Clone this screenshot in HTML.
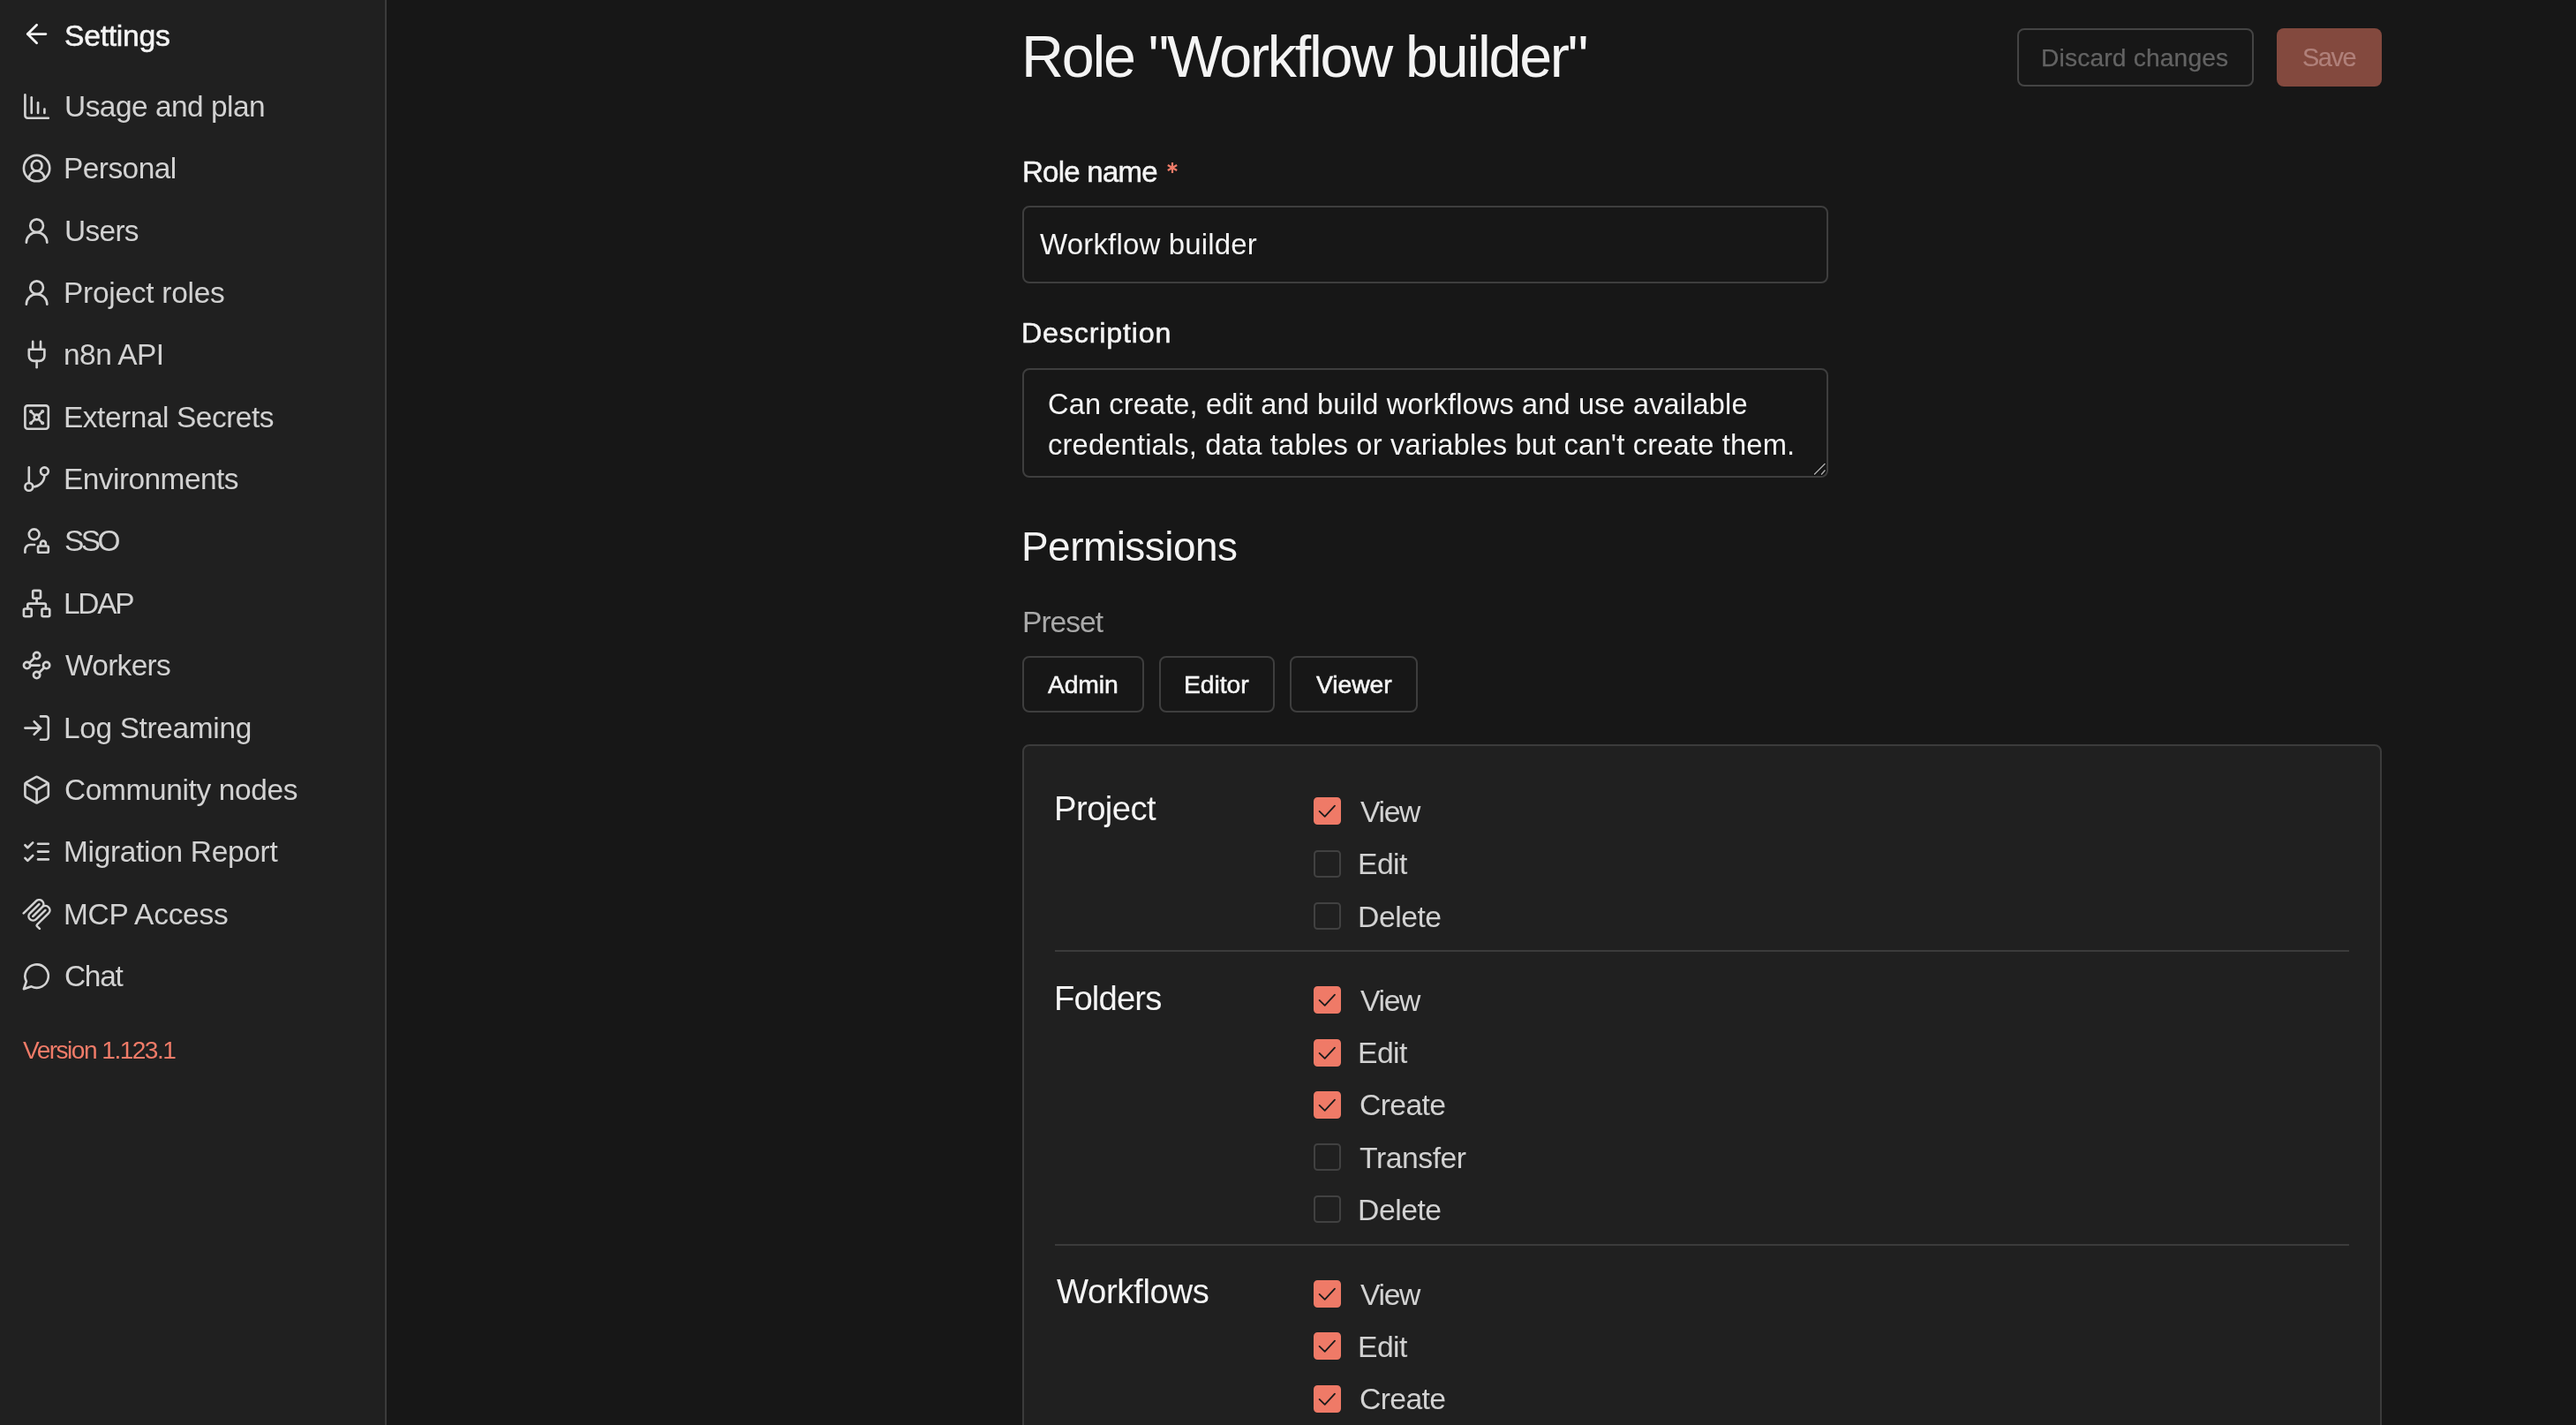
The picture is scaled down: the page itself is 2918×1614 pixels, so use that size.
<!DOCTYPE html>
<html><head><meta charset="utf-8"><title>Role</title><style>
html,body{margin:0;padding:0}
body{width:2918px;height:1614px;overflow:hidden;position:relative;background:#171717;font-family:"Liberation Sans",sans-serif;}
.t{position:absolute;white-space:pre;will-change:transform;font-family:"Liberation Sans",sans-serif;}
.sidebar{position:absolute;left:0;top:0;width:436px;height:1614px;background:#202020;border-right:2px solid #3b3b3b;}
.box{position:absolute;box-sizing:border-box;}
.cb{position:absolute;left:1488px;width:31px;height:31px;box-sizing:border-box;border:2px solid #414141;border-radius:4.5px;background:transparent;}
.cb.on{background:#ef7a67;border-color:#ef7a67;}
.cb svg{position:absolute;left:-2px;top:-2px;}
.ico{position:absolute;}
@media (max-width:2000px){html{zoom:0.5}}


</style></head><body>
<div class="sidebar"></div>
<div class="box" style="left:2285px;top:32px;width:268px;height:66px;border:2px solid #444;border-radius:8px;"></div>
<div class="box" style="left:2579px;top:32px;width:119px;height:66px;background:#83493e;border-radius:8px;"></div>
<div class="box" style="left:1158px;top:233px;width:913px;height:88px;border:2px solid #3e3e3e;border-radius:8px;background:#171717"></div>
<div class="box" style="left:1158px;top:417px;width:913px;height:124px;border:2px solid #3e3e3e;border-radius:8px;background:#171717"></div>
<svg class="ico" style="left:2050px;top:521px" width="20" height="20" viewBox="0 0 20 20"><path d="M5.5 16 L17 4.5 M13.5 16 L17 12" stroke="#0a0a0a" stroke-width="3.6" stroke-linecap="round"/><path d="M5.5 16 L17 4.5 M13.5 16 L17 12" stroke="#a3a3a3" stroke-width="1.7" stroke-linecap="round"/></svg>
<div class="box" style="left:1158px;top:743px;width:138px;height:64px;border:2px solid #3e3e3e;border-radius:8px;"></div>
<div class="box" style="left:1313px;top:743px;width:131px;height:64px;border:2px solid #3e3e3e;border-radius:8px;"></div>
<div class="box" style="left:1461px;top:743px;width:145px;height:64px;border:2px solid #3e3e3e;border-radius:8px;"></div>
<div class="box" style="left:1158px;top:843px;width:1540px;height:900px;border:2px solid #3b3b3b;border-radius:8px;background:#202020"></div>
<div class="box" style="left:1195px;top:1076px;width:1466px;height:2px;background:#3b3b3b"></div>
<div class="box" style="left:1195px;top:1409px;width:1466px;height:2px;background:#3b3b3b"></div>
<svg class="ico" style="left:1321px;top:183px" width="14" height="14" viewBox="0 0 14 14"><path d="M7 1 V13 M1.8 4 L12.2 10 M1.8 10 L12.2 4" stroke="#f07b68" stroke-width="2.2"/></svg>

<svg class="ico" style="left:23.90px;top:21.00px;color:#f4f4f4" width="35.20" height="35.20" viewBox="0 0 24 24" fill="none" stroke="currentColor" stroke-width="1.9" stroke-linecap="round" stroke-linejoin="round"><path d="m12 19-7-7 7-7"/><path d="M19 12H5"/></svg>
<svg class="ico" style="left:23.80px;top:103.00px;color:#d2d2d2" width="35.20" height="35.20" viewBox="0 0 24 24" fill="none" stroke="currentColor" stroke-width="1.8" stroke-linecap="round" stroke-linejoin="round"><path d="M13 17V9"/><path d="M18 17v-3"/><path d="M3 3v16a2 2 0 0 0 2 2h16"/><path d="M8 17V5"/></svg>
<svg class="ico" style="left:23.80px;top:173.35px;color:#d2d2d2" width="35.20" height="35.20" viewBox="0 0 24 24" fill="none" stroke="currentColor" stroke-width="1.8" stroke-linecap="round" stroke-linejoin="round"><path d="M18 20a6 6 0 0 0-12 0"/><circle cx="12" cy="10" r="4"/><circle cx="12" cy="12" r="10"/></svg>
<svg class="ico" style="left:23.80px;top:243.70px;color:#d2d2d2" width="35.20" height="35.20" viewBox="0 0 24 24" fill="none" stroke="currentColor" stroke-width="1.8" stroke-linecap="round" stroke-linejoin="round"><circle cx="12" cy="8" r="5"/><path d="M20 21a8 8 0 0 0-16 0"/></svg>
<svg class="ico" style="left:23.80px;top:314.05px;color:#d2d2d2" width="35.20" height="35.20" viewBox="0 0 24 24" fill="none" stroke="currentColor" stroke-width="1.8" stroke-linecap="round" stroke-linejoin="round"><circle cx="12" cy="8" r="5"/><path d="M20 21a8 8 0 0 0-16 0"/></svg>
<svg class="ico" style="left:23.80px;top:384.40px;color:#d2d2d2" width="35.20" height="35.20" viewBox="0 0 24 24" fill="none" stroke="currentColor" stroke-width="1.8" stroke-linecap="round" stroke-linejoin="round"><path d="M12 22v-5"/><path d="M9 8V2"/><path d="M15 8V2"/><path d="M18 8v5a4 4 0 0 1-4 4h-4a4 4 0 0 1-4-4V8Z"/></svg>
<svg class="ico" style="left:23.80px;top:454.75px;color:#d2d2d2" width="35.20" height="35.20" viewBox="0 0 24 24" fill="none" stroke="currentColor" stroke-width="1.8" stroke-linecap="round" stroke-linejoin="round"><rect width="18" height="18" x="3" y="3" rx="2"/><circle cx="7.5" cy="7.5" r=".5" fill="currentColor"/><path d="m7.9 7.9 2.7 2.7"/><circle cx="16.5" cy="7.5" r=".5" fill="currentColor"/><path d="m13.4 10.6 2.7-2.7"/><circle cx="7.5" cy="16.5" r=".5" fill="currentColor"/><path d="m7.9 16.1 2.7-2.7"/><circle cx="16.5" cy="16.5" r=".5" fill="currentColor"/><path d="m13.4 13.4 2.7 2.7"/><circle cx="12" cy="12" r="2"/></svg>
<svg class="ico" style="left:23.80px;top:525.10px;color:#d2d2d2" width="35.20" height="35.20" viewBox="0 0 24 24" fill="none" stroke="currentColor" stroke-width="1.8" stroke-linecap="round" stroke-linejoin="round"><line x1="6" x2="6" y1="3" y2="15"/><circle cx="18" cy="6" r="3"/><circle cx="6" cy="18" r="3"/><path d="M18 9a9 9 0 0 1-9 9"/></svg>
<svg class="ico" style="left:23.80px;top:595.45px;color:#d2d2d2" width="35.20" height="35.20" viewBox="0 0 24 24" fill="none" stroke="currentColor" stroke-width="1.8" stroke-linecap="round" stroke-linejoin="round"><circle cx="10" cy="7" r="4"/><path d="M10.3 15H7a4 4 0 0 0-4 4v2"/><path d="M15 15.5V14a2 2 0 0 1 4 0v1.5"/><rect width="8" height="5" x="13" y="16" rx=".899"/></svg>
<svg class="ico" style="left:23.80px;top:665.80px;color:#d2d2d2" width="35.20" height="35.20" viewBox="0 0 24 24" fill="none" stroke="currentColor" stroke-width="1.8" stroke-linecap="round" stroke-linejoin="round"><rect x="16" y="16" width="6" height="6" rx="1"/><rect x="2" y="16" width="6" height="6" rx="1"/><rect x="9" y="2" width="6" height="6" rx="1"/><path d="M5 16v-3a1 1 0 0 1 1-1h12a1 1 0 0 1 1 1v3"/><path d="M12 12V8"/></svg>
<svg class="ico" style="left:23.80px;top:736.15px;color:#d2d2d2" width="35.20" height="35.20" viewBox="0 0 24 24" fill="none" stroke="currentColor" stroke-width="1.8" stroke-linecap="round" stroke-linejoin="round"><circle cx="12" cy="4.5" r="2.5"/><path d="m10.2 6.3-3.9 3.9"/><circle cx="4.5" cy="12" r="2.5"/><path d="M7 12h7"/><circle cx="19.5" cy="12" r="2.5"/><path d="m13.8 17.7 3.9-3.9"/><circle cx="12" cy="19.5" r="2.5"/></svg>
<svg class="ico" style="left:23.80px;top:806.50px;color:#d2d2d2" width="35.20" height="35.20" viewBox="0 0 24 24" fill="none" stroke="currentColor" stroke-width="1.8" stroke-linecap="round" stroke-linejoin="round"><path d="m10 17 5-5-5-5"/><path d="M15 12H3"/><path d="M15 3h4a2 2 0 0 1 2 2v14a2 2 0 0 1-2 2h-4"/></svg>
<svg class="ico" style="left:23.80px;top:876.85px;color:#d2d2d2" width="35.20" height="35.20" viewBox="0 0 24 24" fill="none" stroke="currentColor" stroke-width="1.8" stroke-linecap="round" stroke-linejoin="round"><path d="M21 8a2 2 0 0 0-1-1.73l-7-4a2 2 0 0 0-2 0l-7 4A2 2 0 0 0 3 8v8a2 2 0 0 0 1 1.73l7 4a2 2 0 0 0 2 0l7-4A2 2 0 0 0 21 16Z"/><path d="m3.3 7 8.7 5 8.7-5"/><path d="M12 22V12"/></svg>
<svg class="ico" style="left:23.80px;top:947.20px;color:#d2d2d2" width="35.20" height="35.20" viewBox="0 0 24 24" fill="none" stroke="currentColor" stroke-width="1.8" stroke-linecap="round" stroke-linejoin="round"><path d="m3 17 2 2 4-4"/><path d="m3 7 2 2 4-4"/><path d="M13 6h8"/><path d="M13 12h8"/><path d="M13 18h8"/></svg>
<svg class="ico" style="left:23.80px;top:1017.55px;color:#d2d2d2" width="35.20" height="35.20" viewBox="0 0 24 24" fill="none" stroke="currentColor" stroke-width="1.8" stroke-linecap="round" stroke-linejoin="round"><g fill="currentColor" stroke="none"><path d="M15.688 2.343a2.588 2.588 0 00-3.61 0l-9.626 9.44a.863.863 0 01-1.203 0 .823.823 0 010-1.18l9.626-9.44a4.313 4.313 0 016.016 0 4.116 4.116 0 011.204 3.54 4.3 4.3 0 013.609 1.18l.05.05a4.115 4.115 0 010 5.9l-8.706 8.537a.274.274 0 000 .393l1.788 1.754a.823.823 0 010 1.18.863.863 0 01-1.203 0l-1.788-1.753a1.92 1.92 0 010-2.754l8.706-8.538a2.47 2.47 0 000-3.54l-.05-.049a2.588 2.588 0 00-3.607-.003l-7.172 7.034-.002.002-.098.097a.863.863 0 01-1.204 0 .823.823 0 010-1.18l7.273-7.133a2.47 2.47 0 00-.003-3.537z"/><path d="M14.485 4.703a.823.823 0 000-1.18.863.863 0 00-1.204 0l-7.119 6.982a4.115 4.115 0 000 5.9 4.314 4.314 0 006.016 0l7.12-6.982a.823.823 0 000-1.18.863.863 0 00-1.204 0l-7.119 6.982a2.588 2.588 0 01-3.61 0 2.47 2.47 0 010-3.54l7.12-6.982z"/></g></svg>
<svg class="ico" style="left:23.80px;top:1087.90px;color:#d2d2d2" width="35.20" height="35.20" viewBox="0 0 24 24" fill="none" stroke="currentColor" stroke-width="1.8" stroke-linecap="round" stroke-linejoin="round"><path d="M7.9 20A9 9 0 1 0 4 16.1L2 22Z"/></svg>
<div class="cb on" style="top:903.2px"><svg width="31" height="31" viewBox="0 0 31 31"><path d="M6.6 15.9 L12.7 21.8 L24.0 9.7" fill="none" stroke="#1a1a1a" stroke-width="1.8" stroke-linecap="round" stroke-linejoin="round"/></svg></div>
<div class="cb" style="top:962.6px"></div>
<div class="cb" style="top:1022.0px"></div>
<div class="cb on" style="top:1117.2px"><svg width="31" height="31" viewBox="0 0 31 31"><path d="M6.6 15.9 L12.7 21.8 L24.0 9.7" fill="none" stroke="#1a1a1a" stroke-width="1.8" stroke-linecap="round" stroke-linejoin="round"/></svg></div>
<div class="cb on" style="top:1176.5px"><svg width="31" height="31" viewBox="0 0 31 31"><path d="M6.6 15.9 L12.7 21.8 L24.0 9.7" fill="none" stroke="#1a1a1a" stroke-width="1.8" stroke-linecap="round" stroke-linejoin="round"/></svg></div>
<div class="cb on" style="top:1235.8px"><svg width="31" height="31" viewBox="0 0 31 31"><path d="M6.6 15.9 L12.7 21.8 L24.0 9.7" fill="none" stroke="#1a1a1a" stroke-width="1.8" stroke-linecap="round" stroke-linejoin="round"/></svg></div>
<div class="cb" style="top:1295.1px"></div>
<div class="cb" style="top:1354.4px"></div>
<div class="cb on" style="top:1450.1px"><svg width="31" height="31" viewBox="0 0 31 31"><path d="M6.6 15.9 L12.7 21.8 L24.0 9.7" fill="none" stroke="#1a1a1a" stroke-width="1.8" stroke-linecap="round" stroke-linejoin="round"/></svg></div>
<div class="cb on" style="top:1509.4px"><svg width="31" height="31" viewBox="0 0 31 31"><path d="M6.6 15.9 L12.7 21.8 L24.0 9.7" fill="none" stroke="#1a1a1a" stroke-width="1.8" stroke-linecap="round" stroke-linejoin="round"/></svg></div>
<div class="cb on" style="top:1568.7px"><svg width="31" height="31" viewBox="0 0 31 31"><path d="M6.6 15.9 L12.7 21.8 L24.0 9.7" fill="none" stroke="#1a1a1a" stroke-width="1.8" stroke-linecap="round" stroke-linejoin="round"/></svg></div>
<div class="t" id="settings" style="left:73.40px;top:23.76px;font-size:33.72px;line-height:33.72px;letter-spacing:-0.286px;color:#f4f4f4;-webkit-text-stroke:0.55px #f4f4f4;">Settings</div>
<div class="t" id="nav0" style="left:72.53px;top:104.00px;font-size:33.43px;line-height:33.43px;letter-spacing:-0.500px;color:#d2d2d2;">Usage and plan</div>
<div class="t" id="nav1" style="left:71.72px;top:174.35px;font-size:33.43px;line-height:33.43px;letter-spacing:-0.529px;color:#d2d2d2;">Personal</div>
<div class="t" id="nav2" style="left:72.53px;top:244.70px;font-size:33.43px;line-height:33.43px;letter-spacing:-0.677px;color:#d2d2d2;">Users</div>
<div class="t" id="nav3" style="left:71.72px;top:315.05px;font-size:33.43px;line-height:33.43px;letter-spacing:-0.247px;color:#d2d2d2;">Project roles</div>
<div class="t" id="nav4" style="left:72.20px;top:385.40px;font-size:33.43px;line-height:33.43px;letter-spacing:-0.500px;color:#d2d2d2;">n8n API</div>
<div class="t" id="nav5" style="left:71.72px;top:455.75px;font-size:33.43px;line-height:33.43px;letter-spacing:-0.443px;color:#d2d2d2;">External Secrets</div>
<div class="t" id="nav6" style="left:71.72px;top:526.10px;font-size:33.43px;line-height:33.43px;letter-spacing:-0.533px;color:#d2d2d2;">Environments</div>
<div class="t" id="nav7" style="left:72.63px;top:596.45px;font-size:33.43px;line-height:33.43px;letter-spacing:-3.564px;color:#d2d2d2;">SSO</div>
<div class="t" id="nav8" style="left:71.72px;top:666.80px;font-size:33.43px;line-height:33.43px;letter-spacing:-2.271px;color:#d2d2d2;">LDAP</div>
<div class="t" id="nav9" style="left:74.20px;top:737.15px;font-size:33.43px;line-height:33.43px;letter-spacing:-0.679px;color:#d2d2d2;">Workers</div>
<div class="t" id="nav10" style="left:71.72px;top:807.50px;font-size:33.43px;line-height:33.43px;letter-spacing:-0.344px;color:#d2d2d2;">Log Streaming</div>
<div class="t" id="nav11" style="left:72.80px;top:877.85px;font-size:33.43px;line-height:33.43px;letter-spacing:-0.348px;color:#d2d2d2;">Community nodes</div>
<div class="t" id="nav12" style="left:71.72px;top:948.20px;font-size:33.43px;line-height:33.43px;letter-spacing:-0.291px;color:#d2d2d2;">Migration Report</div>
<div class="t" id="nav13" style="left:71.72px;top:1018.55px;font-size:33.43px;line-height:33.43px;letter-spacing:-0.247px;color:#d2d2d2;">MCP Access</div>
<div class="t" id="nav14" style="left:72.80px;top:1088.90px;font-size:33.43px;line-height:33.43px;letter-spacing:-1.298px;color:#d2d2d2;">Chat</div>
<div class="t" id="version" style="left:25.80px;top:1176.25px;font-size:28.05px;line-height:28.05px;letter-spacing:-1.507px;color:#f07b68;">Version 1.123.1</div>
<div class="t" id="title" style="left:1157.40px;top:31.07px;font-size:66.42px;line-height:66.42px;letter-spacing:-2.250px;color:#f4f4f4;">Role &quot;Workflow builder&quot;</div>
<div class="t" id="discard" style="left:2312.20px;top:51.23px;font-size:28.20px;line-height:28.20px;letter-spacing:0.159px;color:#636363;-webkit-text-stroke:0.25px #636363;">Discard changes</div>
<div class="t" id="save" style="left:2608.00px;top:50.82px;font-size:28.92px;line-height:28.92px;letter-spacing:-1.449px;color:#b0807a;-webkit-text-stroke:0.2px #b0807a;">Save</div>
<div class="t" id="lbl_name" style="left:1157.80px;top:178.27px;font-size:32.99px;line-height:32.99px;letter-spacing:-0.741px;color:#f4f4f4;-webkit-text-stroke:0.5px #f4f4f4;">Role name</div>
<div class="t" id="inp_name" style="left:1178.20px;top:259.97px;font-size:32.99px;line-height:32.99px;letter-spacing:0.174px;color:#f4f4f4;">Workflow builder</div>
<div class="t" id="lbl_desc" style="left:1157.00px;top:360.59px;font-size:32.27px;line-height:32.27px;letter-spacing:0.800px;color:#f4f4f4;-webkit-text-stroke:0.5px #f4f4f4;">Description</div>
<div class="t" id="ta1" style="left:1186.73px;top:441.74px;font-size:32.56px;line-height:32.56px;letter-spacing:0.138px;color:#f4f4f4;">Can create, edit and build workflows and use available</div>
<div class="t" id="ta2" style="left:1187.00px;top:487.72px;font-size:32.70px;line-height:32.70px;letter-spacing:0.162px;color:#f4f4f4;">credentials, data tables or variables but can't create them.</div>
<div class="t" id="perm" style="left:1157.48px;top:596.92px;font-size:45.93px;line-height:45.93px;letter-spacing:-0.510px;color:#f4f4f4;">Permissions</div>
<div class="t" id="preset" style="left:1158.39px;top:687.88px;font-size:33.58px;line-height:33.58px;letter-spacing:-1.002px;color:#a9a9a9;">Preset</div>
<div class="t" id="b_admin" style="left:1186.83px;top:761.21px;font-size:28.34px;line-height:28.34px;letter-spacing:-0.149px;color:#f4f4f4;-webkit-text-stroke:0.55px #f4f4f4;">Admin</div>
<div class="t" id="b_editor" style="left:1341.14px;top:761.21px;font-size:28.34px;line-height:28.34px;letter-spacing:-0.078px;color:#f4f4f4;-webkit-text-stroke:0.55px #f4f4f4;">Editor</div>
<div class="t" id="b_viewer" style="left:1491.20px;top:761.21px;font-size:28.34px;line-height:28.34px;letter-spacing:-0.095px;color:#f4f4f4;-webkit-text-stroke:0.55px #f4f4f4;">Viewer</div>
<div class="t" id="sec_project" style="left:1194.40px;top:896.54px;font-size:38.23px;line-height:38.23px;letter-spacing:-0.540px;color:#f4f4f4;">Project</div>
<div class="t" id="sec_folders" style="left:1194.40px;top:1111.94px;font-size:38.23px;line-height:38.23px;letter-spacing:-0.867px;color:#f4f4f4;">Folders</div>
<div class="t" id="sec_workflows" style="left:1196.60px;top:1444.34px;font-size:38.23px;line-height:38.23px;letter-spacing:-0.343px;color:#f4f4f4;">Workflows</div>
<div class="t" id="cb_project_View" style="left:1541.00px;top:902.76px;font-size:33.72px;line-height:33.72px;letter-spacing:-1.367px;color:#d2d2d2;">View</div>
<div class="t" id="cb_project_Edit" style="left:1538.36px;top:962.16px;font-size:33.72px;line-height:33.72px;letter-spacing:-0.573px;color:#d2d2d2;">Edit</div>
<div class="t" id="cb_project_Delete" style="left:1538.36px;top:1021.56px;font-size:33.72px;line-height:33.72px;letter-spacing:-0.474px;color:#d2d2d2;">Delete</div>
<div class="t" id="cb_folders_View" style="left:1541.00px;top:1116.76px;font-size:33.72px;line-height:33.72px;letter-spacing:-1.367px;color:#d2d2d2;">View</div>
<div class="t" id="cb_folders_Edit" style="left:1538.36px;top:1176.06px;font-size:33.72px;line-height:33.72px;letter-spacing:-0.573px;color:#d2d2d2;">Edit</div>
<div class="t" id="cb_folders_Create" style="left:1539.50px;top:1235.36px;font-size:33.72px;line-height:33.72px;letter-spacing:-0.616px;color:#d2d2d2;">Create</div>
<div class="t" id="cb_folders_Transfer" style="left:1540.43px;top:1294.66px;font-size:33.72px;line-height:33.72px;letter-spacing:-0.462px;color:#d2d2d2;">Transfer</div>
<div class="t" id="cb_folders_Delete" style="left:1538.36px;top:1353.96px;font-size:33.72px;line-height:33.72px;letter-spacing:-0.474px;color:#d2d2d2;">Delete</div>
<div class="t" id="cb_workflows_View" style="left:1541.00px;top:1449.66px;font-size:33.72px;line-height:33.72px;letter-spacing:-1.367px;color:#d2d2d2;">View</div>
<div class="t" id="cb_workflows_Edit" style="left:1538.36px;top:1508.96px;font-size:33.72px;line-height:33.72px;letter-spacing:-0.573px;color:#d2d2d2;">Edit</div>
<div class="t" id="cb_workflows_Create" style="left:1539.50px;top:1568.26px;font-size:33.72px;line-height:33.72px;letter-spacing:-0.616px;color:#d2d2d2;">Create</div>
</body></html>
